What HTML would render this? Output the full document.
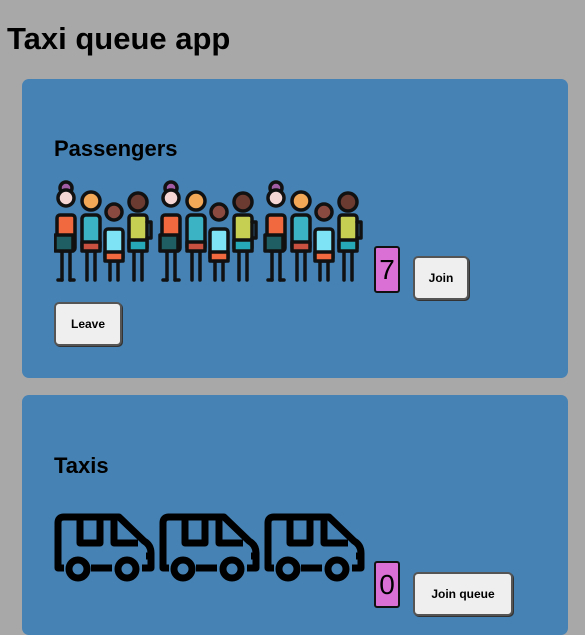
<!DOCTYPE html><html><head><style>
body{margin:0;background:#a8a8a8;font-family:"Liberation Sans",sans-serif;width:585px;height:605px;overflow:hidden;position:relative}
.a{position:absolute}
h1{position:absolute;left:7px;top:19px;margin:0;font-size:31px;font-weight:bold;line-height:40px}
.card{position:absolute;left:22px;width:546px;background:#4682b4;border-radius:7px}
.h{position:absolute;left:54px;font-size:22px;font-weight:bold}
.cnt{position:absolute;width:22px;height:43px;background:#da70d6;border:2px solid #111;border-radius:3px;font-size:28px;line-height:43px;text-align:center}
.btn{position:absolute;background:#efefef;border:2px solid #555;border-radius:5px;font-size:12px;font-weight:bold;text-align:center;box-sizing:border-box;box-shadow:1px 1px 0 #333}
</style></head><body>
<h1>Taxi queue app</h1>
<div class="card" style="top:79px;height:299px"></div>
<div class="card" style="top:395px;height:240px"></div>
<div class="h" style="top:136px">Passengers</div>
<div class="h" style="top:453px">Taxis</div>
<svg class="a" style="left:54px;top:180px" width="310" height="110" viewBox="0 0 310 110">
<defs>
<g id="grp" stroke="#111" stroke-width="3.5" stroke-linejoin="round" stroke-linecap="round">
<g><line x1="8" y1="70" x2="8" y2="100"/><line x1="16" y1="70" x2="16" y2="100"/><line x1="8" y1="100" x2="4" y2="100"/><line x1="16" y1="100" x2="20" y2="100"/>
<circle cx="12" cy="8" r="6" fill="#a25ca6"/><circle cx="12" cy="18" r="8" fill="#f6d5d5"/><rect x="3" y="35" width="18" height="36" rx="3" fill="#f0693f"/><rect x="1" y="55" width="18" height="16" fill="#1f5f63"/></g>
<g><line x1="33" y1="70" x2="33" y2="100"/><line x1="41" y1="70" x2="41" y2="100"/>
<circle cx="37" cy="21" r="9" fill="#f3a857"/><rect x="28" y="35" width="18" height="36" rx="4" fill="#3bb3c4"/><rect x="28" y="62" width="18" height="9" fill="#c9513f"/></g>
<g><line x1="56" y1="80" x2="56" y2="100"/><line x1="64" y1="80" x2="64" y2="100"/>
<circle cx="60" cy="32" r="8" fill="#8a4a40"/><rect x="51" y="49" width="18" height="32" rx="3" fill="#7ee3f5"/><rect x="51" y="72" width="18" height="9" fill="#f0693f"/></g>
<g><line x1="80" y1="70" x2="80" y2="100"/><line x1="88" y1="70" x2="88" y2="100"/>
<circle cx="84" cy="22" r="9" fill="#6b3a30"/><rect x="75" y="35" width="18" height="36" rx="3" fill="#c6cf52"/><rect x="75" y="60" width="18" height="11" fill="#27a8b8"/><path d="M93 42 h4 v16 h-4" fill="none"/></g>
</g></defs>
<use href="#grp"/><use href="#grp" x="105"/><use href="#grp" x="210"/>
</svg>
<div class="cnt" style="left:374px;top:246px">7</div>
<div class="btn" style="left:413px;top:256px;width:56px;height:44px;line-height:40px">Join</div>
<div class="btn" style="left:54px;top:302px;width:68px;height:44px;line-height:40px">Leave</div>
<svg class="a" style="left:54px;top:513px" width="320" height="70" viewBox="0 0 320 70">
<defs><g id="van" fill="none" stroke="#000" stroke-width="7" stroke-linejoin="round">
<path d="M10 55 H4 V10 Q4 4 10 4 H65 L90 28 Q97 32 97 40 V55 H88 M58 55 H37"/>
<path d="M26 6 V30 H46 V6 M60 6 V30 H84"/>
<circle cx="24" cy="56" r="9"/><circle cx="73" cy="56" r="9"/>
<line x1="92" y1="43" x2="98" y2="43"/>
</g></defs>
<use href="#van"/><use href="#van" x="105"/><use href="#van" x="210"/>
</svg>
<div class="cnt" style="left:374px;top:561px">0</div>
<div class="btn" style="left:413px;top:572px;width:100px;height:44px;line-height:40px">Join queue</div>
</body></html>
